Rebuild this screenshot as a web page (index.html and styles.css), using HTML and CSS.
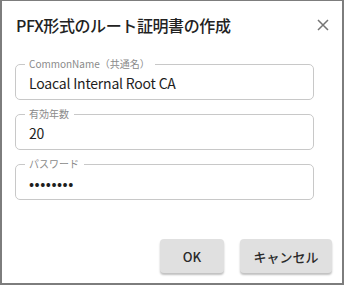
FILE: index.html
```html
<!DOCTYPE html>
<html lang="ja">
<head>
<meta charset="utf-8">
<link rel="stylesheet" href="styles.css">
</head>
<body>
<div class="dialog">
  <header class="head">
    <h1 class="title">PFX形式のルート証明書の作成</h1>
    <button class="close" aria-label="閉じる">
      <svg width="12" height="12" viewBox="0 0 12 12"><path d="M1 1L11 11M11 1L1 11" stroke="#757575" stroke-width="1.5" fill="none"/></svg>
    </button>
  </header>
  <div class="fields">
    <fieldset class="field"><legend class="label">CommonName（共通名）</legend><div class="value">Loacal Internal Root CA</div></fieldset>
    <fieldset class="field"><legend class="label">有効年数</legend><div class="value">20</div></fieldset>
    <fieldset class="field"><legend class="label">パスワード</legend><div class="value dots">••••••••</div></fieldset>
  </div>
  <footer class="actions">
    <button class="btn ok">OK</button>
    <button class="btn cancel">キャンセル</button>
  </footer>
</div>
</body>
</html>
```
FILE: styles.css
```css
* { box-sizing: border-box; }
html, body { margin: 0; padding: 0; background: #fff; }
body {
  font-family: "Noto Sans CJK JP", sans-serif;
  color: #222;
}
.dialog {
  width: 344px;
  height: 285px;
  border: 2px solid #7d7d7d;
  border-top-width: 1px;
  display: flex;
  flex-direction: column;
  background: #fff;
}
.head {
  display: flex;
  justify-content: space-between;
  align-items: center;
  padding: 12px 13px 0 14px;
}
.title {
  margin: 0;
  font-size: 16px;
  line-height: 24px;
  font-weight: 500;
  letter-spacing: -0.4px;
  color: #222;
}
.close {
  border: 0;
  background: none;
  padding: 0;
  width: 12px;
  height: 12px;
  display: flex;
}
.fields {
  display: flex;
  flex-direction: column;
  gap: 7px;
  padding: 20px 28px 0 13px;
}
.field {
  margin: 0;
  border: 1px solid #c8c8c8;
  border-radius: 5px;
  padding: 0 13px 6px 9px;
  min-width: 0;
}
.label {
  padding: 0 5px 0 4px;
  font-size: 10px;
  line-height: 14px;
  color: #8a8a8a;
}
.value {
  margin-top: 2px;
  padding-left: 4px;
  font-size: 14px;
  line-height: 20px;
  letter-spacing: -0.2px;
  color: #1e1e1e;
}
.dots {
  font-size: 15px;
  letter-spacing: 0.5px;
}
.actions {
  margin-top: auto;
  display: flex;
  justify-content: flex-end;
  gap: 16px;
  padding: 0 10px 10px;
}
.btn {
  height: 34px;
  border: 0;
  border-radius: 4px;
  background: #e0e0e0;
  box-shadow: 0 2px 2px rgba(0,0,0,0.25);
  font-family: "Noto Sans CJK JP", sans-serif;
  font-size: 13px;
  font-weight: 500;
  color: #2a2a2a;
  padding: 0;
}
.ok { width: 64px; }
.cancel { width: 92px; }
```
